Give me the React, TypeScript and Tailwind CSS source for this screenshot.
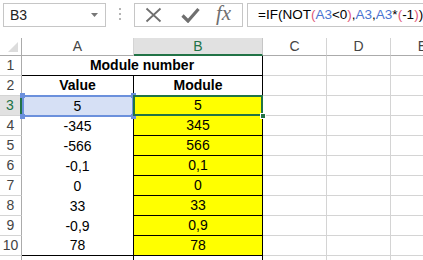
const cols = ["A", "B", "C", "D", "E"];

const rows = [
  { a: "-345", b: "345" },
  { a: "-566", b: "566" },
  { a: "-0,1", b: "0,1" },
  { a: "0", b: "0" },
  { a: "33", b: "33" },
  { a: "-0,9", b: "0,9" },
  { a: "78", b: "78" },
];

function RowHead({ n, active }: { n?: number; active?: boolean }) {
  return (
    <div
      className={
        active
          ? "h-[20px] flex items-center justify-center bg-[#e1e1e1] text-[#217346] border-r-2 border-r-[#217346] border-b border-b-[#d4d4d4]"
          : "h-[20px] flex items-center justify-center text-[#444] border-r border-r-[#ababab] border-b border-b-[#d4d4d4]"
      }
    >
      {n}
    </div>
  );
}

function Empty() {
  return <div className="h-[20px] border-r border-b border-[#d4d4d4]" />;
}

function EmptyCols() {
  return (
    <>
      <Empty />
      <Empty />
      <Empty />
    </>
  );
}

export default function App() {
  return (
    <div
      className="w-[423px] h-[260px] overflow-hidden bg-white text-[14px] text-black"
      style={{ fontFamily: '"Liberation Sans", Arial, sans-serif' }}
    >
      {/* formula bar */}
      <div className="flex items-start h-[38px] pt-[3px] pl-[3px]">
        <div className="w-[103px] h-[24px] border border-[#c6c6c6] flex items-center justify-between pl-[6px] pr-[7px]">
          <span className="text-[14px] text-[#222]">B3</span>
          <svg width="7" height="4" viewBox="0 0 7 4">
            <path d="M0 0H7L3.5 4Z" fill="#777" />
          </svg>
        </div>
        <div className="w-[28px] flex flex-col items-center gap-[3px] pt-[5px]">
          <span className="w-[2px] h-[2px] bg-[#b5b5b5]" />
          <span className="w-[2px] h-[2px] bg-[#b5b5b5]" />
          <span className="w-[2px] h-[2px] bg-[#b5b5b5]" />
        </div>
        <div className="w-[109px] h-[24px] border border-[#c6c6c6] flex items-center pl-[10px]">
          <svg width="17" height="16" viewBox="0 0 17 16">
            <path d="M1.5 1.5L15.5 14.5M15.5 1.5L1.5 14.5" stroke="#6f6f6f" strokeWidth="1.8" />
          </svg>
          <svg width="19" height="16" viewBox="0 0 19 16" className="ml-[19px]">
            <path d="M1.5 8.5L7 14L17.5 2" stroke="#6f6f6f" strokeWidth="3.2" fill="none" />
          </svg>
          <span
            className="ml-[16px] text-[21px] italic text-[#6f6f6f] leading-none -mt-[3px]"
            style={{ fontFamily: '"Liberation Serif", "Times New Roman", serif' }}
          >
            fx
          </span>
        </div>
        <div className="ml-[4px] flex-1 h-[24px] border border-r-0 border-[#c6c6c6] flex items-center pl-[10px] text-[13.5px] whitespace-nowrap overflow-hidden">
          <span>=IF(NOT</span>
          <span className="text-[#e0577a]">(</span>
          <span className="text-[#4a74d2]">A3</span>
          <span>&lt;0</span>
          <span className="text-[#e0577a]">)</span>
          <span>,</span>
          <span className="text-[#4a74d2]">A3</span>
          <span>,</span>
          <span className="text-[#4a74d2]">A3</span>
          <span>*</span>
          <span className="text-[#e0577a]">(</span>
          <span>-1</span>
          <span className="text-[#e0577a]">)</span>
          <span>)</span>
        </div>
      </div>

      {/* sheet grid */}
      <div className="grid grid-cols-[22px_112px_129px_64px_64px_64px] text-[14px]">
        {/* column headers */}
        <div className="h-[18px] relative border-r border-b border-[#ababab]">
          <svg width="10" height="10" viewBox="0 0 10 10" className="absolute right-[3px] bottom-[3px]">
            <path d="M10 0V10H0Z" fill="#dcdcdc" />
          </svg>
        </div>
        {cols.map((c) =>
          c === "B" ? (
            <div
              key={c}
              className="h-[18px] flex items-center justify-center bg-[#e1e1e1] text-[#217346] border-r border-r-[#c6c6c6] border-b-2 border-b-[#217346]"
            >
              {c}
            </div>
          ) : (
            <div
              key={c}
              className="h-[18px] flex items-center justify-center text-[#444] border-r border-r-[#d4d4d4] border-b border-b-[#ababab]"
            >
              {c}
            </div>
          )
        )}

        {/* row 1 */}
        <RowHead n={1} />
        <div className="col-span-2 h-[20px] flex items-center justify-center font-bold border-r border-b border-black">
          Module number
        </div>
        <EmptyCols />

        {/* row 2 */}
        <RowHead n={2} />
        <div className="h-[20px] flex items-center justify-center font-bold border-r border-b border-black">
          Value
        </div>
        <div className="h-[20px] flex items-center justify-center font-bold border-r border-b border-black">
          Module
        </div>
        <EmptyCols />

        {/* row 3 - active */}
        <RowHead n={3} active />
        <div className="h-[20px] relative flex items-center justify-center bg-[#d6e0f5] border-r border-r-black">
          5
          <div className="absolute left-0 -top-[1px] right-[-1px] bottom-[-1px] border-2 border-[#6b90dc]" />
          <span className="absolute -left-[2px] -top-[3px] w-[5px] h-[5px] bg-[#6b90dc]" />
          <span className="absolute -right-[3px] -top-[3px] w-[5px] h-[5px] bg-[#6b90dc]" />
          <span className="absolute -left-[2px] -bottom-[3px] w-[5px] h-[5px] bg-[#6b90dc]" />
          <span className="absolute -right-[3px] -bottom-[3px] w-[5px] h-[5px] bg-[#6b90dc]" />
        </div>
        <div className="h-[20px] relative flex items-center justify-center bg-[#ffff00] border-r border-b border-black">
          5
          <div className="absolute -left-[1px] -top-[1px] right-[-1px] bottom-[-1px] border-2 border-[#217346]" />
          <span className="absolute -right-[4px] -bottom-[4px] w-[6px] h-[6px] bg-[#217346] border border-white" />
        </div>
        <EmptyCols />

        {rows.map((r, i) => (
          <div key={i} className="contents">
            <RowHead n={i + 4} />
            <div
              className={
                i === rows.length - 1
                  ? "h-[20px] flex items-center justify-center border-r border-b border-black"
                  : "h-[20px] flex items-center justify-center border-r border-r-black"
              }
            >
              {r.a}
            </div>
            <div className="h-[20px] flex items-center justify-center bg-[#ffff00] border-r border-b border-black">
              {r.b}
            </div>
            <EmptyCols />
          </div>
        ))}

        {/* row 11, only its top edge is in view */}
        <RowHead />
        <div className="h-[20px] border-r border-black" />
        <div className="h-[20px] border-r border-black" />
        <EmptyCols />
      </div>
    </div>
  );
}
